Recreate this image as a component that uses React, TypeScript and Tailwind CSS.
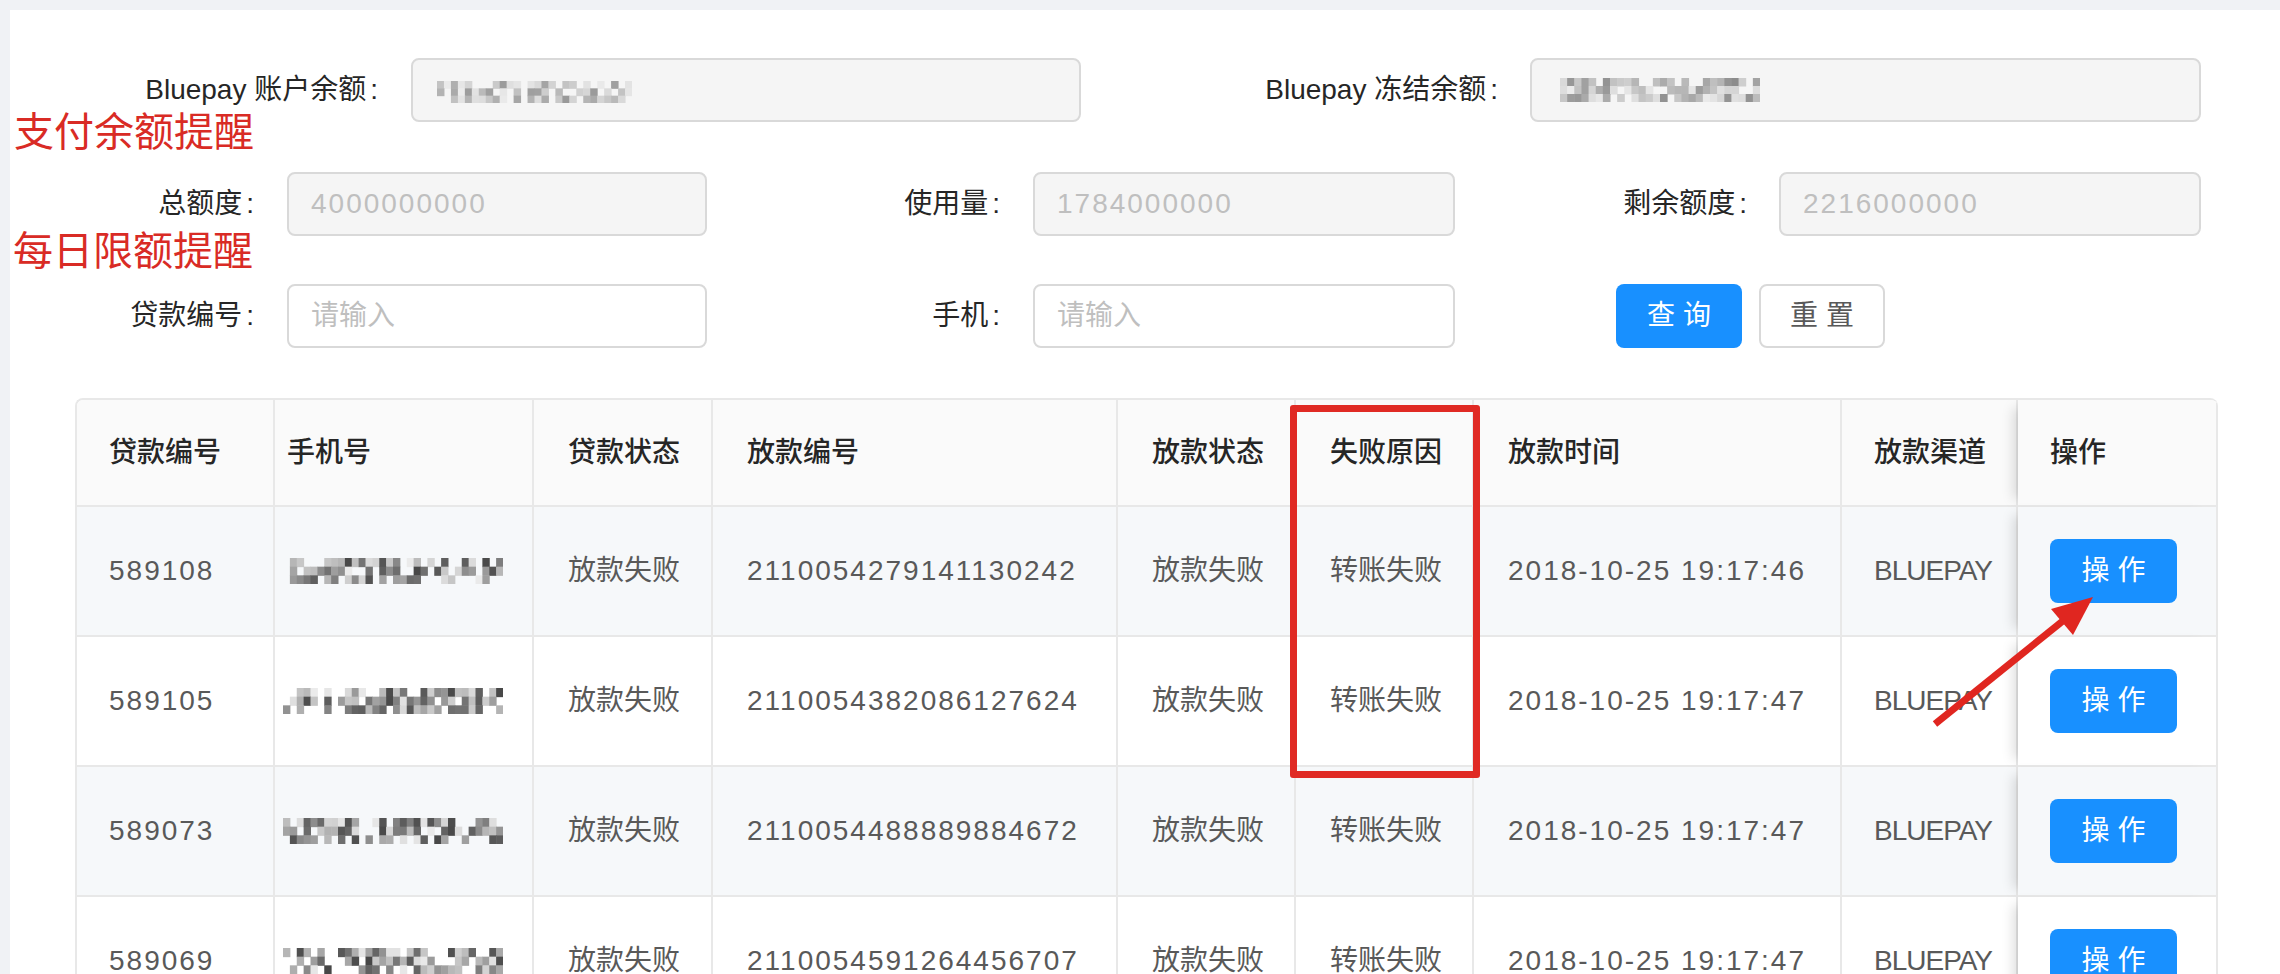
import React from "react";

function Mosaic({
  w,
  h,
  seed,
  cols,
  rows,
  min,
  max,
  density,
}: {
  w: number;
  h: number;
  seed: number;
  cols: number;
  rows: number;
  min: number;
  max: number;
  density: number;
}) {
  let s = (seed * 7919 + 104729) % 233280;
  const rnd = () => {
    s = (s * 9301 + 49297) % 233280;
    return s / 233280;
  };
  const cw = w / cols;
  const ch = h / rows;
  const rects: React.ReactElement[] = [];
  for (let r = 0; r < rows; r++) {
    for (let c = 0; c < cols; c++) {
      const p = rnd();
      const g = Math.round(min + rnd() * (max - min));
      if (p < density) {
        rects.push(
          <rect
            key={`${r}-${c}`}
            x={c * cw}
            y={r * ch}
            width={cw + 0.5}
            height={ch + 0.5}
            fill={`rgb(${g},${g},${g})`}
          />
        );
      }
    }
  }
  return (
    <svg width={w} height={h} viewBox={`0 0 ${w} ${h}`} className="block">
      {rects}
    </svg>
  );
}

const rowsData = [
  { id: "589108", pay: "2110054279141130242", time: "2018-10-25 19:17:46", seed: 11, striped: true },
  { id: "589105", pay: "2110054382086127624", time: "2018-10-25 19:17:47", seed: 23, striped: false },
  { id: "589073", pay: "2110054488889884672", time: "2018-10-25 19:17:47", seed: 37, striped: true },
  { id: "589069", pay: "2110054591264456707", time: "2018-10-25 19:17:47", seed: 51, striped: false },
];

const cellBase =
  "flex items-center border-r-2 border-b-2 border-[#e8e8e8] text-[28px] whitespace-nowrap";

function Label({ text }: { text: string }) {
  return (
    <span className="text-[28px] leading-none text-[#262626] whitespace-nowrap">
      {text}
      <span className="ml-[4px]">:</span>
    </span>
  );
}

export default function App() {
  return (
    <div className="relative w-[2280px] h-[974px] overflow-hidden bg-[#f0f2f5] pl-[10px] pt-[10px] font-['Liberation_Sans','Noto_Sans_CJK_SC',sans-serif]">
      <div className="h-full bg-white pt-[48px]">
        {/* Row 1 */}
        <div className="flex h-[64px]">
          <div className="flex w-[1071px] items-center justify-end">
            <Label text="Bluepay 账户余额" />
            <div className="ml-[33px] flex h-[64px] w-[670px] items-center rounded-[8px] border-2 border-[#d9d9d9] bg-[#f5f5f5] pl-[24px] pt-[4px]">
              <Mosaic w={195} h={22} seed={5} cols={28} rows={3} min={150} max={235} density={0.7} />
            </div>
          </div>
          <div className="flex w-[1120px] items-center justify-end">
            <Label text="Bluepay 冻结余额" />
            <div className="ml-[32px] flex h-[64px] w-[671px] items-center rounded-[8px] border-2 border-[#d9d9d9] bg-[#f5f5f5] pl-[28px]">
              <Mosaic w={200} h={24} seed={9} cols={28} rows={3} min={140} max={235} density={0.72} />
            </div>
          </div>
        </div>

        {/* Row 2 */}
        <div className="mt-[50px] flex h-[64px]">
          <div className="flex w-[697px] items-center justify-end">
            <Label text="总额度" />
            <input
              readOnly
              value="4000000000"
              className="ml-[33px] h-[64px] w-[420px] rounded-[8px] border-2 border-[#d9d9d9] bg-[#f5f5f5] pl-[22px] text-[28px] tracking-[2px] text-[#bfbfbf] outline-none"
            />
          </div>
          <div className="flex w-[748px] items-center justify-end">
            <Label text="使用量" />
            <input
              readOnly
              value="1784000000"
              className="ml-[33px] h-[64px] w-[422px] rounded-[8px] border-2 border-[#d9d9d9] bg-[#f5f5f5] pl-[22px] text-[28px] tracking-[2px] text-[#bfbfbf] outline-none"
            />
          </div>
          <div className="flex w-[746px] items-center justify-end">
            <Label text="剩余额度" />
            <input
              readOnly
              value="2216000000"
              className="ml-[32px] h-[64px] w-[422px] rounded-[8px] border-2 border-[#d9d9d9] bg-[#f5f5f5] pl-[22px] text-[28px] tracking-[2px] text-[#bfbfbf] outline-none"
            />
          </div>
        </div>

        {/* Row 3 */}
        <div className="mt-[48px] flex h-[64px]">
          <div className="flex w-[697px] items-center justify-end">
            <Label text="贷款编号" />
            <input
              placeholder="请输入"
              className="ml-[33px] h-[64px] w-[420px] rounded-[8px] border-2 border-[#d9d9d9] bg-white pl-[22px] text-[28px] text-[#595959] outline-none placeholder:text-[#bfbfbf]"
            />
          </div>
          <div className="flex w-[748px] items-center justify-end">
            <Label text="手机" />
            <input
              placeholder="请输入"
              className="ml-[33px] h-[64px] w-[422px] rounded-[8px] border-2 border-[#d9d9d9] bg-white pl-[22px] text-[28px] text-[#595959] outline-none placeholder:text-[#bfbfbf]"
            />
          </div>
          <div className="flex items-center gap-[17px] pl-[161px]">
            <button className="h-[64px] w-[126px] rounded-[8px] bg-[#1890ff] text-[28px] text-white">
              查 询
            </button>
            <button className="h-[64px] w-[126px] rounded-[8px] border-2 border-[#d9d9d9] bg-white text-[28px] text-[#595959]">
              重 置
            </button>
          </div>
        </div>

        {/* Table */}
        <div className="ml-[65px] mt-[50px] w-[2143px] overflow-hidden rounded-t-[8px] border-l-2 border-t-2 border-[#e8e8e8]">
          <div className="grid grid-cols-[198px_259px_179px_405px_178px_178px_368px_176px_200px] bg-[#fafafa] font-medium text-[#262626]">
            <div className={`${cellBase} h-[107px] pl-[32px]`}>贷款编号</div>
            <div className={`${cellBase} h-[107px] pl-[12px]`}>手机号</div>
            <div className={`${cellBase} h-[107px] pl-[34px]`}>贷款状态</div>
            <div className={`${cellBase} h-[107px] pl-[34px]`}>放款编号</div>
            <div className={`${cellBase} h-[107px] pl-[34px]`}>放款状态</div>
            <div className={`${cellBase} h-[107px] pl-[34px]`}>失败原因</div>
            <div className={`${cellBase} h-[107px] pl-[34px]`}>放款时间</div>
            <div className={`${cellBase} h-[107px] pl-[32px]`}>放款渠道</div>
            <div className={`${cellBase} relative z-10 h-[107px] bg-[#fafafa] pl-[32px] shadow-[-12px_0_12px_-8px_rgba(0,0,0,0.15)]`}>
              操作
            </div>
          </div>
          {rowsData.map((r) => (
            <div
              key={r.id}
              className={`grid grid-cols-[198px_259px_179px_405px_178px_178px_368px_176px_200px] text-[#595959] ${
                r.striped ? "bg-[#f6f8fa]" : "bg-white"
              }`}
            >
              <div className={`${cellBase} h-[130px] pl-[32px] tracking-[2px]`}>{r.id}</div>
              <div className={`${cellBase} h-[130px] pl-[8px]`}>
                <Mosaic w={220} h={26} seed={r.seed} cols={32} rows={3} min={70} max={235} density={0.7} />
              </div>
              <div className={`${cellBase} h-[130px] pl-[34px]`}>放款失败</div>
              <div className={`${cellBase} h-[130px] pl-[34px] tracking-[2px]`}>{r.pay}</div>
              <div className={`${cellBase} h-[130px] pl-[34px]`}>放款失败</div>
              <div className={`${cellBase} h-[130px] pl-[34px]`}>转账失败</div>
              <div className={`${cellBase} h-[130px] pl-[34px] tracking-[2px]`}>{r.time}</div>
              <div className={`${cellBase} h-[130px] pl-[32px] tracking-[-1px]`}>BLUEPAY</div>
              <div
                className={`${cellBase} relative z-10 h-[130px] pl-[32px] shadow-[-12px_0_12px_-8px_rgba(0,0,0,0.15)] ${
                  r.striped ? "bg-[#f6f8fa]" : "bg-white"
                }`}
              >
                <button className="h-[64px] w-[127px] rounded-[8px] bg-[#1890ff] text-[28px] text-white">
                  操 作
                </button>
              </div>
            </div>
          ))}
        </div>
      </div>

      {/* Annotations (overlaid on screenshot) */}
      <div className="absolute z-20 left-[14px] top-[109px] text-[40px] leading-[40px] text-[#d92b25] font-['Noto_Sans_CJK_SC',sans-serif]">
        支付余额提醒
      </div>
      <div className="absolute z-20 left-[13px] top-[228px] text-[40px] leading-[40px] text-[#d92b25] font-['Noto_Sans_CJK_SC',sans-serif]">
        每日限额提醒
      </div>
      <div className="absolute z-20 left-[1290px] top-[405px] h-[373px] w-[190px] rounded-[3px] border-[7px] border-[#e02a24]" />
      <svg className="absolute z-20 left-0 top-0" width={2280} height={974} viewBox="0 0 2280 974">
        <line x1={1935} y1={724} x2={2064} y2={620} stroke="#e02620" strokeWidth={7} strokeLinecap="butt" />
        <polygon points="2093,597 2051,609 2073,635" fill="#e02620" />
      </svg>
    </div>
  );
}
